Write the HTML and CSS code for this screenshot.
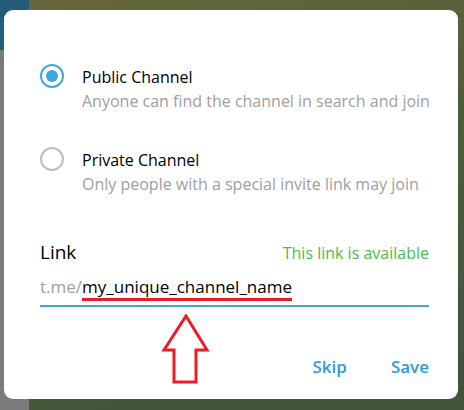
FILE: index.html
```html
<!DOCTYPE html>
<html>
<head>
<meta charset="utf-8">
<link rel="stylesheet" href="styles.css">
</head>
<body>
<div class="backdrop">
  <div class="sidebar">
    <div class="sidebar-head"></div>
    <div class="sidebar-body"></div>
  </div>
  <div class="chat"></div>
</div>

<div class="dialog">
  <div class="option">
    <span class="radio radio-on"><span class="dot"></span></span>
    <div class="option-text">
      <div class="option-title">Public Channel</div>
      <div class="option-sub">Anyone can find the channel in search and join</div>
    </div>
  </div>
  <div class="option option-2">
    <span class="radio"></span>
    <div class="option-text">
      <div class="option-title">Private Channel</div>
      <div class="option-sub">Only people with a special invite link may join</div>
    </div>
  </div>

  <div class="link-head">
    <span class="link-label">Link</span>
    <span class="link-status">This link is available</span>
  </div>
  <div class="link-input">
    <span class="prefix">t.me/</span><span class="name">my_unique_channel_name</span>
  </div>

  <div class="actions">
    <span class="btn">Skip</span>
    <span class="btn">Save</span>
  </div>

  <svg class="arrow" width="50" height="72" viewBox="0 0 50 72">
    <path d="M25 2 L46 36 L35 36 L35 68 L13 68 L13 36 L3 36 Z" fill="none" stroke="#ed1c24" stroke-width="3" stroke-linejoin="miter"/>
  </svg>
</div>
</body>
</html>
```

FILE: styles.css
```css
* { box-sizing: border-box; }
html, body { margin: 0; padding: 0; }
body {
  width: 464px;
  height: 410px;
  overflow: hidden;
  position: relative;
  font-family: "Open Sans", "DejaVu Sans", sans-serif;
}
.backdrop {
  display: flex;
  width: 464px;
  height: 410px;
}
.sidebar {
  width: 29px;
  display: flex;
  flex-direction: column;
}
.sidebar-head { height: 50px; background: #245a7a; }
.sidebar-body { flex: 1; background: #7b7b7b; }
.chat {
  flex: 1;
  background: linear-gradient(165deg, #66683d 0%, #4f5c3b 40%, #3f5439 100%);
}
.dialog {
  position: absolute;
  left: 4px;
  top: 10px;
  width: 454px;
  height: 389px;
  background: #fff;
  border-radius: 9px;
  padding: 57px 29px 0 36px;
}
.option {
  display: flex;
  align-items: flex-start;
}
.option-2 { margin-top: 39px; }
.radio {
  width: 24px;
  height: 24px;
  border-radius: 50%;
  border: 2px solid #bdbdbd;
  margin-top: -3px;
  margin-right: 18px;
  flex: none;
  display: flex;
  align-items: center;
  justify-content: center;
}
.radio-on { border-color: #40a7e3; }
.dot {
  width: 12px;
  height: 12px;
  border-radius: 50%;
  background: #40a7e3;
}
.option-text { white-space: nowrap; }
.option-title {
  font-size: 16px;
  line-height: 20px;
  color: #000;
}
.option-sub {
  margin-top: 4px;
  font-size: 16px;
  line-height: 20px;
  color: #a0a0a0;
}
.link-head {
  margin-top: 46px;
  display: flex;
  justify-content: space-between;
  align-items: baseline;
}
.link-label {
  font-size: 19px;
  line-height: 24px;
  color: #000;
}
.link-status {
  font-size: 16px;
  color: #4cbb4c;
}
.link-input {
  margin-top: 13px;
  font-size: 17px;
  line-height: 20px;
  padding: 0 0 8px 0;
  border-bottom: 2px solid #40a7e3;
}
.prefix { color: #a0a0a0; }
.name {
  color: #000;
  border-bottom: 3px solid #ed1c24;
}
.actions {
  margin-top: 50px;
  display: flex;
  justify-content: flex-end;
  gap: 44px;
}
.btn {
  font-size: 17px;
  font-weight: 600;
  color: #2e9ae0;
  line-height: 20px;
}
.arrow {
  position: absolute;
  left: 157px;
  top: 304px;
}
```
